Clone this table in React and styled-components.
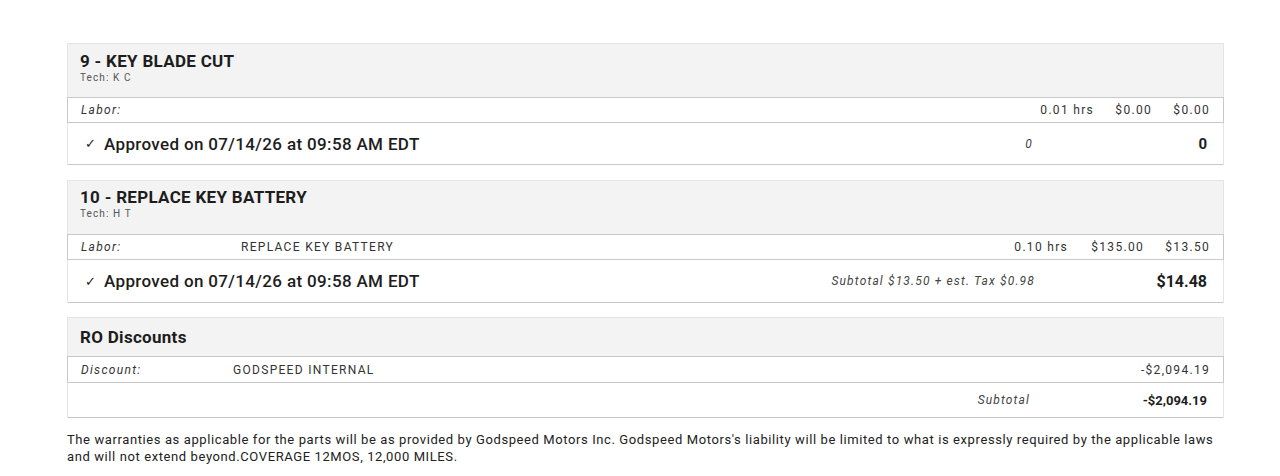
import React from "react";
import styled, { createGlobalStyle } from "styled-components";

const Global = createGlobalStyle`
  html, body { margin: 0; padding: 0; background: #fff; }
  body { font-family: Roboto, "Liberation Sans", Arial, sans-serif; color: #222; }
`;

const Page = styled.div`
  width: 1280px;
  height: 476px;
  box-sizing: border-box;
  padding: 43px 56px 0 67px;
  display: flex;
  flex-direction: column;
  overflow: hidden;
`;

const Card = styled.section`
  display: flex;
  flex-direction: column;
  border: 1px solid #e4e4e4;
  border-bottom: none;
  margin-bottom: ${(p) => p.$gap || 0}px;
`;

const Header = styled.div`
  background: #f3f3f3;
  box-sizing: border-box;
  height: ${(p) => p.$h}px;
  padding: ${(p) => p.$pt}px 12px 0 12px;
  display: flex;
  flex-direction: column;
`;

const Title = styled.div`
  font-size: 17px;
  font-weight: 700;
  line-height: 20px;
  color: #1d1d1d;
  letter-spacing: 0.3px;
`;

const Tech = styled.div`
  font-size: 10px;
  line-height: 13px;
  color: #555;
  letter-spacing: 1.1px;
`;

const LineRow = styled.div`
  box-sizing: border-box;
  height: ${(p) => p.$h || 26}px;
  margin: 0 -1px;
  border: 1px solid #c9c9c9;
  display: flex;
  align-items: center;
  padding: 0 13px 0 13px;
  font-size: 12px;
  letter-spacing: 1.3px;
  color: #333;
`;

const Label = styled.span`
  font-style: italic;
  width: ${(p) => p.$w}px;
  flex: none;
`;

const Desc = styled.span`
  flex: 1;
`;

const Num = styled.span`
  text-align: right;
  width: ${(p) => p.$w}px;
  flex: none;
`;

const TotalRow = styled.div`
  box-sizing: border-box;
  height: ${(p) => p.$h}px;
  border-bottom: 1px solid #c9c9c9;
  display: flex;
  align-items: center;
  padding: 0 16px 0 17px;
`;

const Approved = styled.div`
  flex: 1;
  font-size: 17px;
  font-weight: 500;
  letter-spacing: 0.35px;
  color: #1d1d1d;
  display: flex;
  align-items: center;
  gap: 8px;
`;

const Check = styled.span`
  font-size: 13px;
  font-weight: 500;
  letter-spacing: 0;
`;

const Note = styled.span`
  font-size: 12px;
  font-style: italic;
  letter-spacing: 1.15px;
  color: #444;
  text-align: right;
  width: ${(p) => p.$w}px;
  flex: none;
`;

const Amount = styled.span`
  font-size: ${(p) => p.$size || 16}px;
  font-weight: 700;
  text-align: right;
  width: ${(p) => p.$w}px;
  flex: none;
  color: #1d1d1d;
`;

const Spacer = styled.span`
  flex: 1;
`;

const Footer = styled.p`
  margin: 13px 0 0 0;
  font-size: 13px;
  line-height: 17px;
  color: #222;
  letter-spacing: 0.6px;
  width: 1166px;
`;

export default function App() {
  return (
    <Page>
      <Global />
      <Card $gap={15}>
        <Header $h={53} $pt={7}>
          <Title>9 - KEY BLADE CUT</Title>
          <Tech>Tech: K C</Tech>
        </Header>
        <LineRow>
          <Label $w={160}>Labor:</Label>
          <Desc></Desc>
          <Num $w={60}>0.01 hrs</Num>
          <Num $w={58}>$0.00</Num>
          <Num $w={58}>$0.00</Num>
        </LineRow>
        <TotalRow $h={42}>
          <Approved>
            <Check>✓</Check>
            <span>Approved on 07/14/26 at 09:58 AM EDT</span>
          </Approved>
          <Note $w={200}>0</Note>
          <Amount $w={174} $size={15}>0</Amount>
        </TotalRow>
      </Card>

      <Card $gap={14}>
        <Header $h={53} $pt={6}>
          <Title>10 - REPLACE KEY BATTERY</Title>
          <Tech>Tech: H T</Tech>
        </Header>
        <LineRow>
          <Label $w={160}>Labor:</Label>
          <Desc>REPLACE KEY BATTERY</Desc>
          <Num $w={70}>0.10 hrs</Num>
          <Num $w={76}>$135.00</Num>
          <Num $w={66}>$13.50</Num>
        </LineRow>
        <TotalRow $h={43}>
          <Approved>
            <Check>✓</Check>
            <span>Approved on 07/14/26 at 09:58 AM EDT</span>
          </Approved>
          <Note $w={260}>Subtotal $13.50 + est. Tax $0.98</Note>
          <Amount $w={172}>$14.48</Amount>
        </TotalRow>
      </Card>

      <Card $gap={0}>
        <Header $h={38} $pt={9}>
          <Title>RO Discounts</Title>
        </Header>
        <LineRow $h={27}>
          <Label $w={152}>Discount:</Label>
          <Desc>GODSPEED INTERNAL</Desc>
          <Num $w={100}>-$2,094.19</Num>
        </LineRow>
        <TotalRow $h={35}>
          <Spacer />
          <Note $w={100}>Subtotal</Note>
          <Amount $w={177} $size={13}>-$2,094.19</Amount>
        </TotalRow>
      </Card>

      <Footer>
        The warranties as applicable for the parts will be as provided by Godspeed Motors Inc. Godspeed Motors's liability will be limited to what is expressly required by the applicable laws and will not extend beyond.COVERAGE 12MOS, 12,000 MILES.
      </Footer>
    </Page>
  );
}
